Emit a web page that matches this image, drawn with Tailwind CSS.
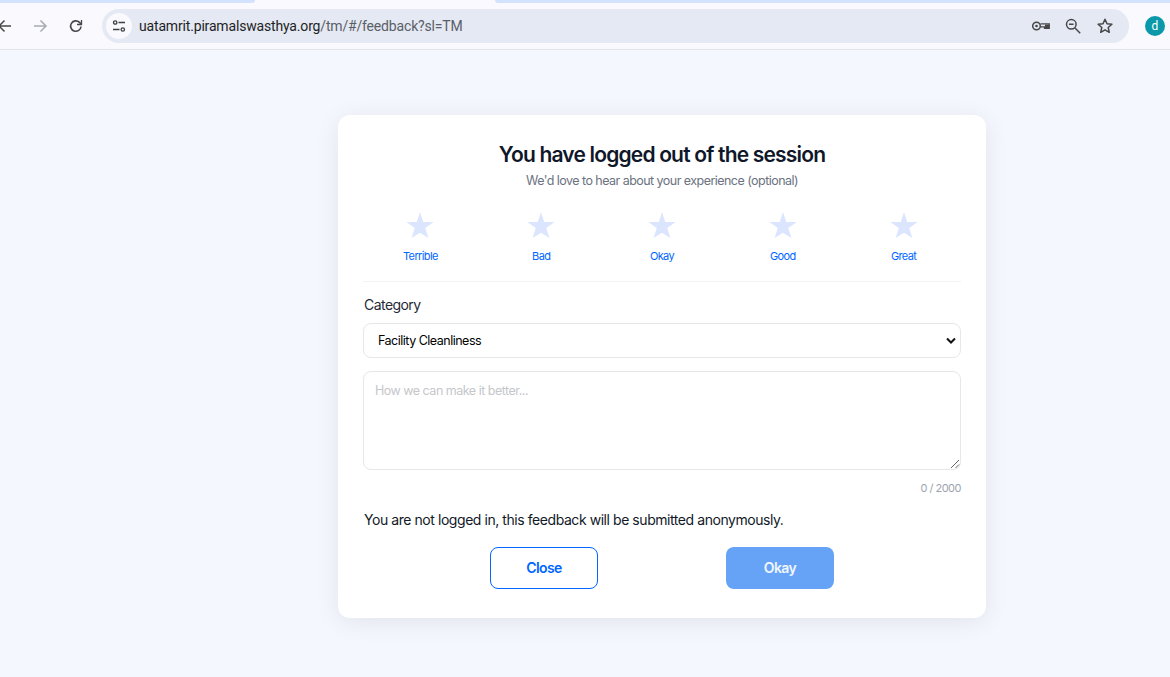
<!doctype html>
<html>
<head>
<meta charset="utf-8">
<script src="https://cdn.jsdelivr.net/npm/@tailwindcss/browser@4"></script>
</head>
<body class="w-[1170px] h-[677px] overflow-hidden bg-[#f4f7fd] font-['Inter','Liberation_Sans',sans-serif]">
<header class="relative h-[50px] bg-[#f9f9fe] border-b border-[#e3e3ea] font-['Roboto','Liberation_Sans',sans-serif]">
  <div class="absolute top-0 left-0 h-[3px] w-[255px] bg-[#d3e3fd] rounded-br-lg"></div>
  <div class="absolute top-0 left-[495px] h-[3px] w-[675px] bg-[#d3e3fd] rounded-bl-lg"></div>
  <div class="flex items-center h-[49px] pt-[3px]">
    <div class="w-[102px] flex items-center shrink-0 relative h-full">
      <svg class="absolute left-[-3px] top-[15px]" width="16" height="16" viewBox="0 0 16 16" fill="none" stroke="#474747" stroke-width="1.5"><path d="M14 8H2M7.5 2.5 2 8l5.500 5.500"/></svg>
      <svg class="absolute left-[32px] top-[15px]" width="16" height="16" viewBox="0 0 16 16" fill="none" stroke="#a9abb0" stroke-width="1.500"><path d="M2 8h12M8.500 2.500 14 8l-5.500 5.500"/></svg>
      <svg class="absolute left-[68px] top-[15px]" width="16" height="16" viewBox="0 0 16 16" fill="none" stroke="#474747" stroke-width="1.600"><path d="M13 8.500a5.200 5.200 0 1 1-1.500-4.100L13 6"/><path d="M13.500 2v4.500H9" stroke-width="1.300"/></svg>
    </div>
    <div class="flex items-center w-[1027px] h-[34px] rounded-full bg-[#e4e9f4] pl-[4px] pr-[15px]">
      <div class="w-[26px] h-[26px] rounded-full bg-[#f9f9fe] flex items-center justify-center shrink-0">
        <svg width="14" height="14" viewBox="0 0 14 14" fill="none" stroke="#3c4043" stroke-width="1.300"><circle cx="3.200" cy="3.500" r="1.700"/><path d="M6.500 3.500H13M1 10.500h6.500"/><circle cx="10.800" cy="10.500" r="1.700"/></svg>
      </div>
      <div class="ml-[7px] text-[14px] tracking-[-0.17px] text-[#1f1f1f] whitespace-nowrap">uatamrit.piramalswasthya.org<span class="text-[#5b5e66]">/tm/#/feedback?sl=TM</span></div>
      <div class="ml-auto flex items-center gap-[14px]">
        <svg width="18" height="18" viewBox="0 0 18 18" fill="none" stroke="#474747"><circle cx="4.500" cy="9" r="3.800" stroke-width="1.500"/><circle cx="4.500" cy="9" r="1.300" fill="#474747" stroke="none"/><path d="M8.500 6.800H17.300V11.500H12.500V9.800H8.500" stroke-width="1.200"/><path d="M13 7.500H17V11.500H13Z" fill="#474747" stroke="none"/></svg>
        <svg width="18" height="18" viewBox="0 0 18 18" fill="none" stroke="#474747" stroke-width="1.500"><circle cx="7.300" cy="7.300" r="4.800"/><path d="M11 11l5.200 5.200M5 7.300h4.600"/></svg>
        <svg width="18" height="18" viewBox="0 0 18 18" fill="none" stroke="#474747" stroke-width="1.500"><path d="M9 2.300l2 4.500 4.900.5-3.700 3.200 1.100 4.800L9 12.800l-4.300 2.500 1.100-4.800L2.100 7.300 7 6.800Z" stroke-linejoin="round"/></svg>
      </div>
    </div>
    <div class="ml-[16px] w-[20px] h-[20px] rounded-full bg-[#0b98a8] text-white text-[12px] flex items-center justify-center shrink-0">d</div>
  </div>
</header>
<main class="flex justify-center pt-[65px] pl-[154px]">
  <section class="w-[648px] h-[503px] bg-white rounded-[12px] shadow-[0_4px_24px_rgba(15,23,42,0.08)] px-[25px] pt-[25px] flex flex-col">
    <h1 class="text-center text-[21px] leading-[28px] pt-[1px] -mb-[1px] font-semibold tracking-[-0.82px] text-[#0f172a]">You have logged out of the session</h1>
    <p class="text-center text-[12.5px] leading-[18px] mt-[4px] tracking-[-0.54px] text-[#6b7280]">We'd love to hear about your experience (optional)</p>
    <div class="grid grid-cols-5 mt-[22px] -mx-[3px] h-[69px]">
      <div class="flex flex-col items-center"><svg width="28" height="26" viewBox="0.6 0 26.8 25.4" fill="#dbe5fe"><path d="M14 0 17.140 9.670H27.310L19.090 15.650 22.230 25.330 14 20.350 5.770 25.330 8.910 15.650 .69 9.670H10.860Z"/></svg><span class="mt-[11px] text-[11px] leading-[14px] tracking-[-0.62px] text-[#0066ff]">Terrible</span></div>
      <div class="flex flex-col items-center"><svg width="28" height="26" viewBox="0.6 0 26.8 25.4" fill="#dbe5fe"><path d="M14 0 17.140 9.670H27.310L19.090 15.650 22.230 25.330 14 20.350 5.770 25.330 8.910 15.650 .69 9.670H10.860Z"/></svg><span class="mt-[11px] text-[11px] leading-[14px] tracking-[-0.62px] text-[#0066ff]">Bad</span></div>
      <div class="flex flex-col items-center"><svg width="28" height="26" viewBox="0.6 0 26.8 25.4" fill="#dbe5fe"><path d="M14 0 17.140 9.670H27.310L19.090 15.650 22.230 25.330 14 20.350 5.770 25.330 8.910 15.650 .69 9.670H10.860Z"/></svg><span class="mt-[11px] text-[11px] leading-[14px] tracking-[-0.62px] text-[#0066ff]">Okay</span></div>
      <div class="flex flex-col items-center"><svg width="28" height="26" viewBox="0.6 0 26.8 25.4" fill="#dbe5fe"><path d="M14 0 17.140 9.670H27.310L19.090 15.650 22.230 25.330 14 20.350 5.770 25.330 8.910 15.650 .69 9.670H10.860Z"/></svg><span class="mt-[11px] text-[11px] leading-[14px] tracking-[-0.62px] text-[#0066ff]">Good</span></div>
      <div class="flex flex-col items-center"><svg width="28" height="26" viewBox="0.6 0 26.8 25.4" fill="#dbe5fe"><path d="M14 0 17.140 9.670H27.310L19.090 15.650 22.230 25.330 14 20.350 5.770 25.330 8.910 15.650 .69 9.670H10.860Z"/></svg><span class="mt-[11px] text-[11px] leading-[14px] tracking-[-0.62px] text-[#0066ff]">Great</span></div>
    </div>
    <div class="border-t border-[#f1f3f6]"></div>
    <label class="mt-[14px] pl-[1px] text-[14px] leading-[18px] tracking-[-0.55px] text-[#1f2937]">Category</label>
    <div class="relative mt-[9px] h-[35px] border border-[#e5e7eb] rounded-[8px] flex items-center pl-[14px] pt-[1px] text-[12.5px] tracking-[-0.5px] text-black">
      Facility Cleanliness
      <svg class="absolute right-[3px] top-[12px]" width="12" height="10" viewBox="0 0 12 10" fill="none" stroke="#111" stroke-width="2"><path d="M2 2.500l4 4 4-4"/></svg>
    </div>
    <div class="relative mt-[13px] h-[99px] border border-[#e5e7eb] rounded-[8px] pl-[11px] pt-[11px] text-[12.5px] leading-[16px] tracking-[-0.5px] text-[#c5c7cb]">
      How we can make it better...
      <svg class="absolute right-0 bottom-0" width="10" height="10" viewBox="0 0 10 10" stroke="#666" stroke-width="1"><path d="M1 9l8-8M5.500 9L9 5.500"/></svg>
    </div>
    <div class="mt-[11px] text-right text-[11px] leading-[14px] tracking-[-0.5px] text-[#9ca3af]">0 / 2000</div>
    <p class="mt-[16px] pl-[1px] text-[14px] leading-[18px] tracking-[-0.44px] text-[#111827]">You are not logged in, this feedback will be submitted anonymously.</p>
    <div class="mt-[18px] flex justify-center gap-[128px]">
      <button class="w-[108px] h-[42px] pb-[1px] rounded-[8px] border border-[#0066ff] bg-white text-[#0066ff] text-[14px] font-semibold tracking-[-0.6px]">Close</button>
      <button class="w-[108px] h-[42px] pb-[1px] rounded-[8px] bg-[#66a3f7] text-white/90 text-[14px] font-semibold tracking-[-0.6px]">Okay</button>
    </div>
  </section>
</main>
</body>
</html>
